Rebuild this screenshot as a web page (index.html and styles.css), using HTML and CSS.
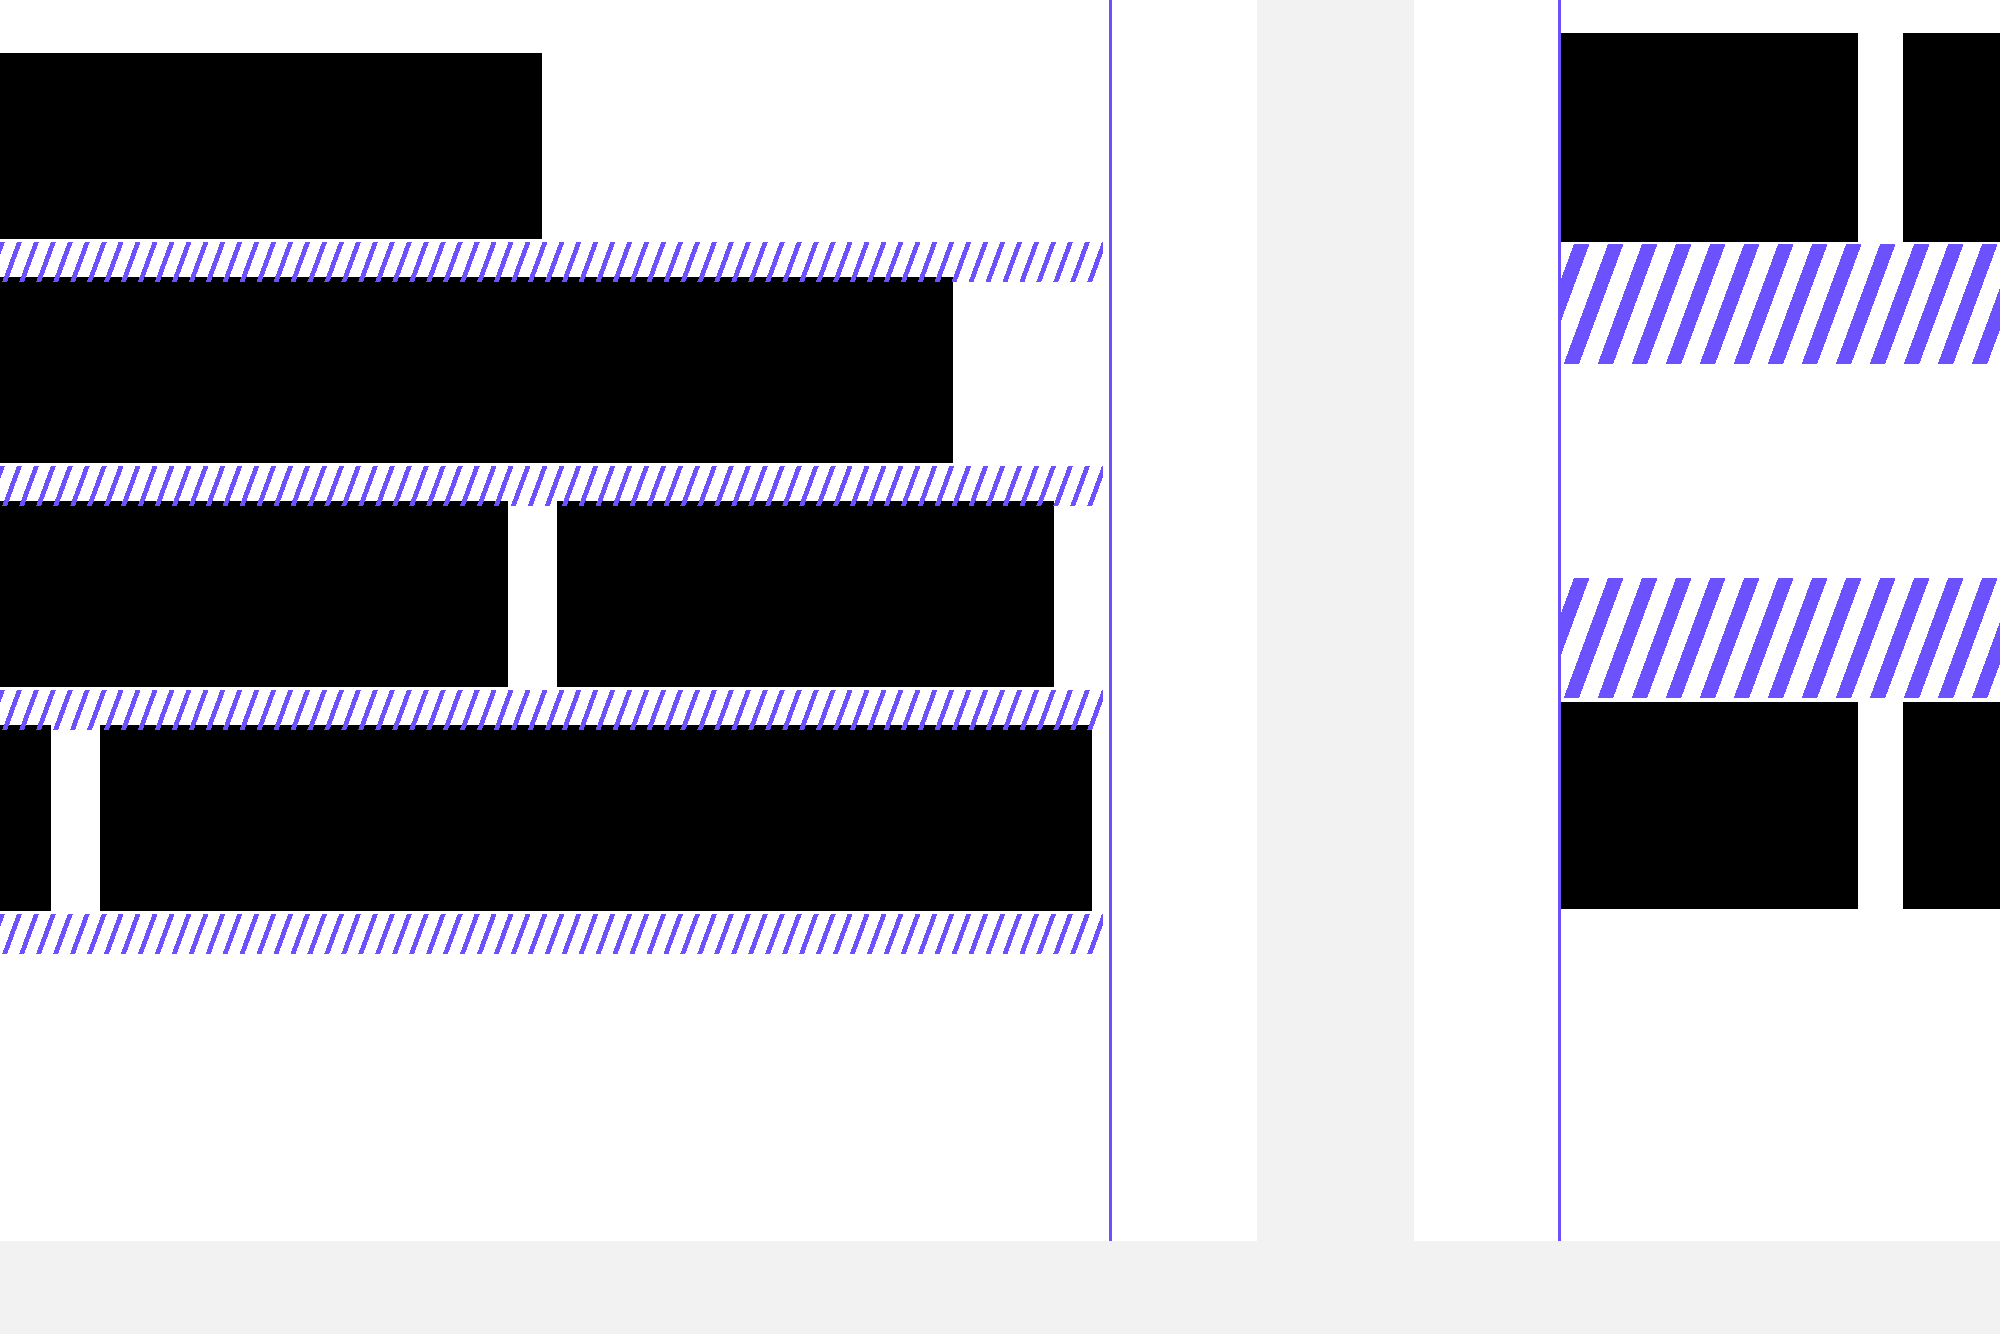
FILE: index.html
```html
<!DOCTYPE html>
<html>
<head>
<meta charset="utf-8">
<title>Layout grid</title>
<link rel="stylesheet" href="styles.css">
</head>
<body>
<div class="canvas">
  <section class="page page-left">
    <div class="guide guide-left"></div>
    <div class="row">
      <div class="blk w542"></div>
    </div>
    <div class="hatch-sm"></div>
    <div class="row">
      <div class="blk w953"></div>
    </div>
    <div class="hatch-sm"></div>
    <div class="row">
      <div class="blk w508"></div>
      <div class="blk w497"></div>
    </div>
    <div class="hatch-sm"></div>
    <div class="row">
      <div class="blk w51"></div>
      <div class="blk w992"></div>
    </div>
    <div class="hatch-sm"></div>
  </section>
  <section class="page page-right">
    <div class="guide guide-right"></div>
    <div class="row-lg row-lg-top">
      <div class="blk w297"></div>
      <div class="blk w297"></div>
    </div>
    <div class="hatch-lg hatch-first"></div>
    <div class="hatch-lg hatch-second"></div>
    <div class="row-lg row-lg-bottom">
      <div class="blk w297"></div>
      <div class="blk w297"></div>
    </div>
  </section>
</div>
</body>
</html>
```
FILE: styles.css
```css
html, body {
  margin: 0;
  padding: 0;
}
body {
  width: 2000px;
  height: 1334px;
  overflow: hidden;
  background: #f2f2f2;
  font-family: "Liberation Sans", Arial, sans-serif;
}
.canvas {
  display: flex;
  align-items: flex-start;
  gap: 157px;
}
.page {
  position: relative;
  background: #ffffff;
  height: 1241px;
  box-sizing: border-box;
  overflow: hidden;
  flex-shrink: 0;
}
.page-left {
  width: 1257px;
  padding-top: 53px;
}
.page-right {
  width: 586px;
  padding-top: 33px;
  padding-left: 147px;
}
.guide {
  position: absolute;
  top: 0;
  bottom: 0;
  width: 3px;
  background: #6c52ff;
  z-index: 2;
}
.guide-left { left: 1109px; }
.guide-right { left: 144px; }

.row {
  display: flex;
  gap: 49px;
  height: 186px;
}
.blk {
  background: #000000;
  height: 100%;
  flex-shrink: 0;
}
.w542 { width: 542px; }
.w953 { width: 953px; }
.w508 { width: 508px; }
.w497 { width: 497px; }
.w51 { width: 51px; }
.w992 { width: 992px; }
.w297 { width: 297px; }

.hatch-sm {
  position: relative;
  z-index: 1;
  width: 1103px;
  height: 40px;
  margin-top: 3px;
  margin-bottom: -5px;
  background-image: repeating-linear-gradient(110.3deg, #6c52ff 0 4.7px, transparent 4.7px 15.9px);
}

.row-lg {
  display: flex;
  gap: 45px;
}
.row-lg-top { height: 209px; }
.row-lg-bottom { height: 207px; margin-top: 4px; }

.hatch-lg {
  height: 120px;
  width: 100%;
  background-image: repeating-linear-gradient(110.3deg, transparent 0 12.2px, #6c52ff 12.2px 26.7px, transparent 26.7px 31.9px);
}
.hatch-first { margin-top: 2px; }
.hatch-second { margin-top: 214px; }
```
